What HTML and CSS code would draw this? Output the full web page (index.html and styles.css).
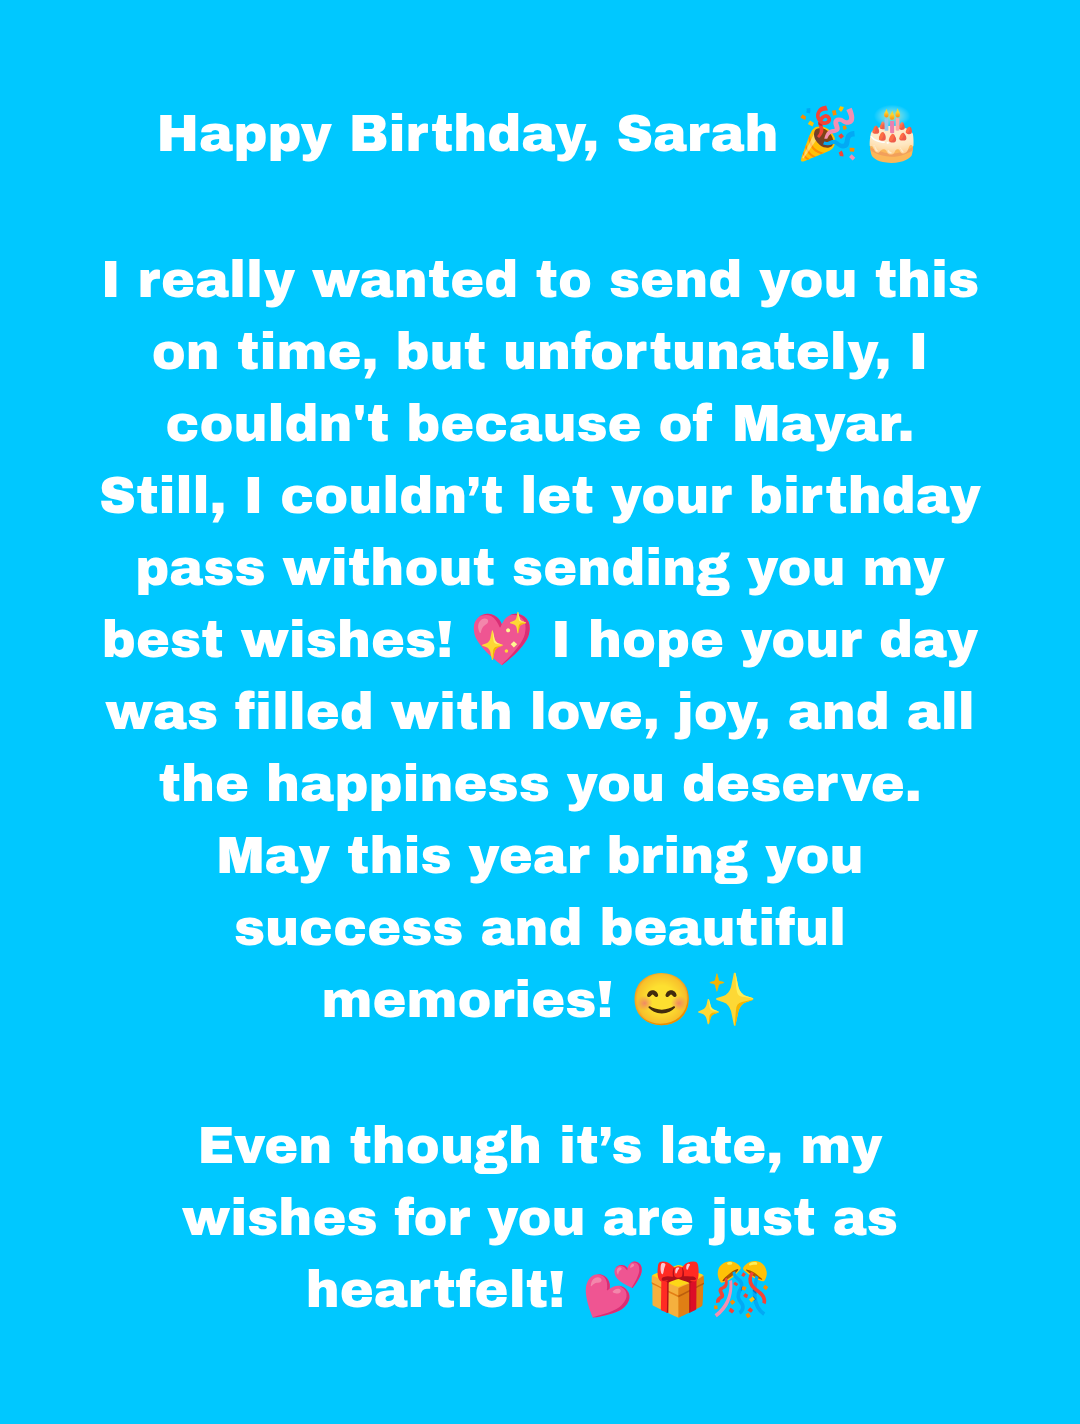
FILE: index.html
```html
<!DOCTYPE html>
<html lang="en">
<head>
<meta charset="utf-8">
<meta name="viewport" content="width=device-width, initial-scale=1">
<title>Happy Birthday, Sarah</title>
<link rel="stylesheet" href="styles.css">
</head>
<body>
<main class="card">
<h1 class="line">Happy Birthday, Sarah 🎉🎂</h1>
<p class="line">I really wanted to send you this on time, but unfortunately, I couldn't because of Mayar.<br>Still, I couldn’t let your birthday pass without sending you my best wishes! 💖 I hope your day was filled with love, joy, and all the happiness you deserve.<br>May this year bring you success and beautiful memories! 😊✨</p>
<p class="line">Even though it’s late, my wishes for you are just as heartfelt! 💕🎁🎊</p>
</main>
</body>
</html>
```
FILE: styles.css
```css
body {
  margin: 0;
  background: #00c8ff;
  color: #fff;
}

.card {
  box-sizing: border-box;
  display: flex;
  flex-direction: column;
  justify-content: center;
  gap: 74px;
  min-height: 100vh;
  max-width: 1080px;
  margin: 0 auto;
  padding: 72px 96px;
  font: 400 51px/72px "Archivo Black", Inter, sans-serif;
  font-variant-ligatures: none;
  text-align: center;
}

.line {
  margin: 0;
  font-size: inherit;
  font-weight: inherit;
}
```
